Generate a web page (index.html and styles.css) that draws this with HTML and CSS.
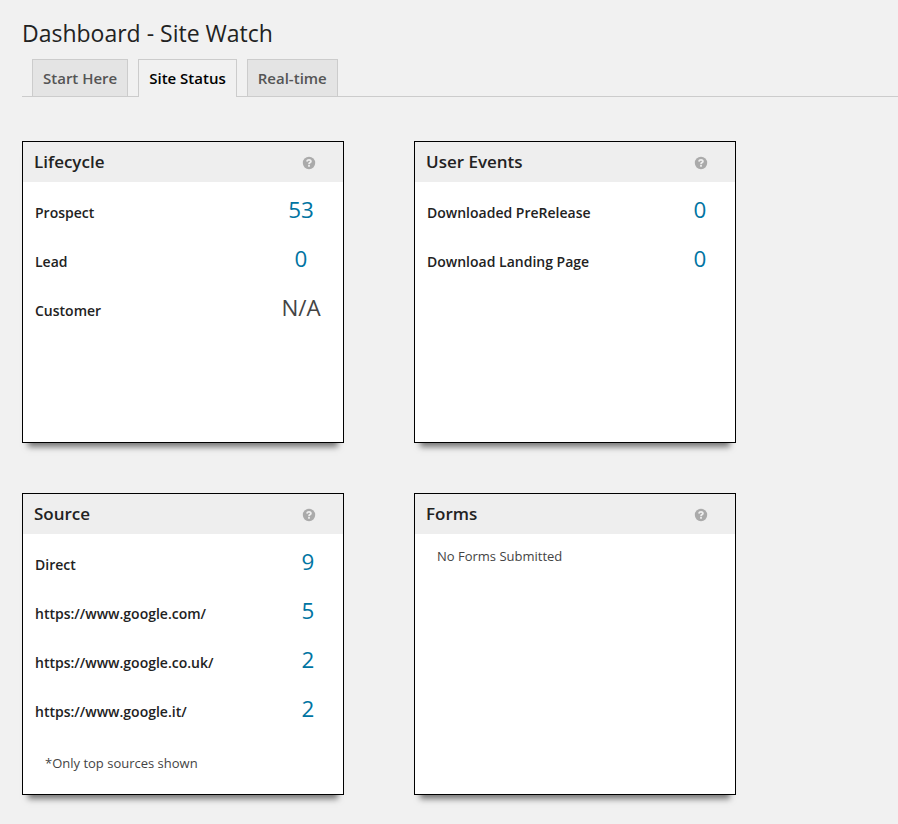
FILE: index.html
```html
<!DOCTYPE html>
<html lang="en">
<head>
<meta charset="utf-8">
<title>Dashboard - Site Watch</title>
<link rel="stylesheet" href="styles.css">
</head>
<body>
<h1>Dashboard - Site Watch</h1>
<nav class="tabs">
<a class="tab">Start Here</a>
<a class="tab active">Site Status</a>
<a class="tab">Real-time</a>
</nav>
<main class="grid">
<section class="card">
<header><h2>Lifecycle</h2><svg class="help" viewBox="0 0 12 12"><circle cx="6" cy="6" r="6.2"/><path d="M3.8 4.4Q4.3 2.8 6 2.8Q7.9 2.8 7.9 4.4C7.9 5.7 6 5.5 6 7.2M6 8V9.8"/></svg></header>
<div class="row"><span class="label">Prospect</span><span class="value">53</span></div>
<div class="row"><span class="label">Lead</span><span class="value">0</span></div>
<div class="row"><span class="label">Customer</span><span class="value na">N/A</span></div>
</section>
<section class="card right">
<header><h2>User Events</h2><svg class="help" viewBox="0 0 12 12"><circle cx="6" cy="6" r="6.2"/><path d="M3.8 4.4Q4.3 2.8 6 2.8Q7.9 2.8 7.9 4.4C7.9 5.7 6 5.5 6 7.2M6 8V9.8"/></svg></header>
<div class="row"><span class="label">Downloaded PreRelease</span><span class="value">0</span></div>
<div class="row"><span class="label">Download Landing Page</span><span class="value">0</span></div>
</section>
<section class="card right">
<header><h2>Source</h2><svg class="help" viewBox="0 0 12 12"><circle cx="6" cy="6" r="6.2"/><path d="M3.8 4.4Q4.3 2.8 6 2.8Q7.9 2.8 7.9 4.4C7.9 5.7 6 5.5 6 7.2M6 8V9.8"/></svg></header>
<div class="row"><span class="label">Direct</span><span class="value">9</span></div>
<div class="row"><span class="label">https://www.google.com/</span><span class="value">5</span></div>
<div class="row"><span class="label">https://www.google.co.uk/</span><span class="value">2</span></div>
<div class="row"><span class="label">https://www.google.it/</span><span class="value">2</span></div>
<p class="foot">*Only top sources shown</p>
</section>
<section class="card">
<header><h2>Forms</h2><svg class="help" viewBox="0 0 12 12"><circle cx="6" cy="6" r="6.2"/><path d="M3.8 4.4Q4.3 2.8 6 2.8Q7.9 2.8 7.9 4.4C7.9 5.7 6 5.5 6 7.2M6 8V9.8"/></svg></header>
<p class="empty">No Forms Submitted</p>
</section>
</main>
</body>
</html>
```
FILE: styles.css
```css
* { box-sizing: border-box; }
body { margin: 0; min-height: 824px; padding: 19px 0 0 22px; background: #f1f1f1; color: #222; font-family: "Open Sans", sans-serif; }
h1 { margin: 0; font-size: 23px; line-height: 29px; font-weight: 400; }
.tabs { display: flex; gap: 10px; height: 49px; padding: 11px 0 0 10px; border-bottom: 1px solid #ccc; }
.tab { height: 37px; padding: 6px 10px; border: 1px solid #ccc; border-bottom: 0; background: #e4e4e4; color: #555; font-size: 15px; line-height: 24px; font-weight: 600; white-space: nowrap; }
.tab.active { height: 38px; background: #f1f1f1; color: #000; }
.grid { display: grid; grid-template-columns: 322px 322px; gap: 50px 70px; margin-top: 44px; }
.card { height: 302px; border: 1px solid #000; background: #fff; box-shadow: 0 10px 6px -6px #777; }
.card header { display: flex; align-items: center; justify-content: space-between; height: 40px; margin-bottom: 5px; padding: 0 28px 0 11px; background: #eee; }
h2 { margin: 0; font-size: 17px; line-height: 24px; font-weight: 600; }
.help { width: 12px; height: 12px; margin-top: 2px; overflow: visible; }
.help circle { fill: #aaa; }
.help path { fill: none; stroke: #eee; stroke-width: 1.8; }
.row { display: flex; height: 49px; padding: 0 11px 0 12px; justify-content: space-between; }
.label { padding-top: 16px; font-size: 14px; line-height: 20px; font-weight: 600; }
.value { width: 62px; padding-top: 7px; text-align: center; font-size: 22.4px; line-height: 31px; color: #0074a2; }
.na { color: #444; }
.right .row { padding-right: 12px; }
.right .value { width: 46px; }
.foot, .empty { margin: 0; padding-left: 22px; font-size: 13px; line-height: 20px; color: #444; }
.foot { padding-top: 18px; }
.empty { padding-top: 7px; }
```
